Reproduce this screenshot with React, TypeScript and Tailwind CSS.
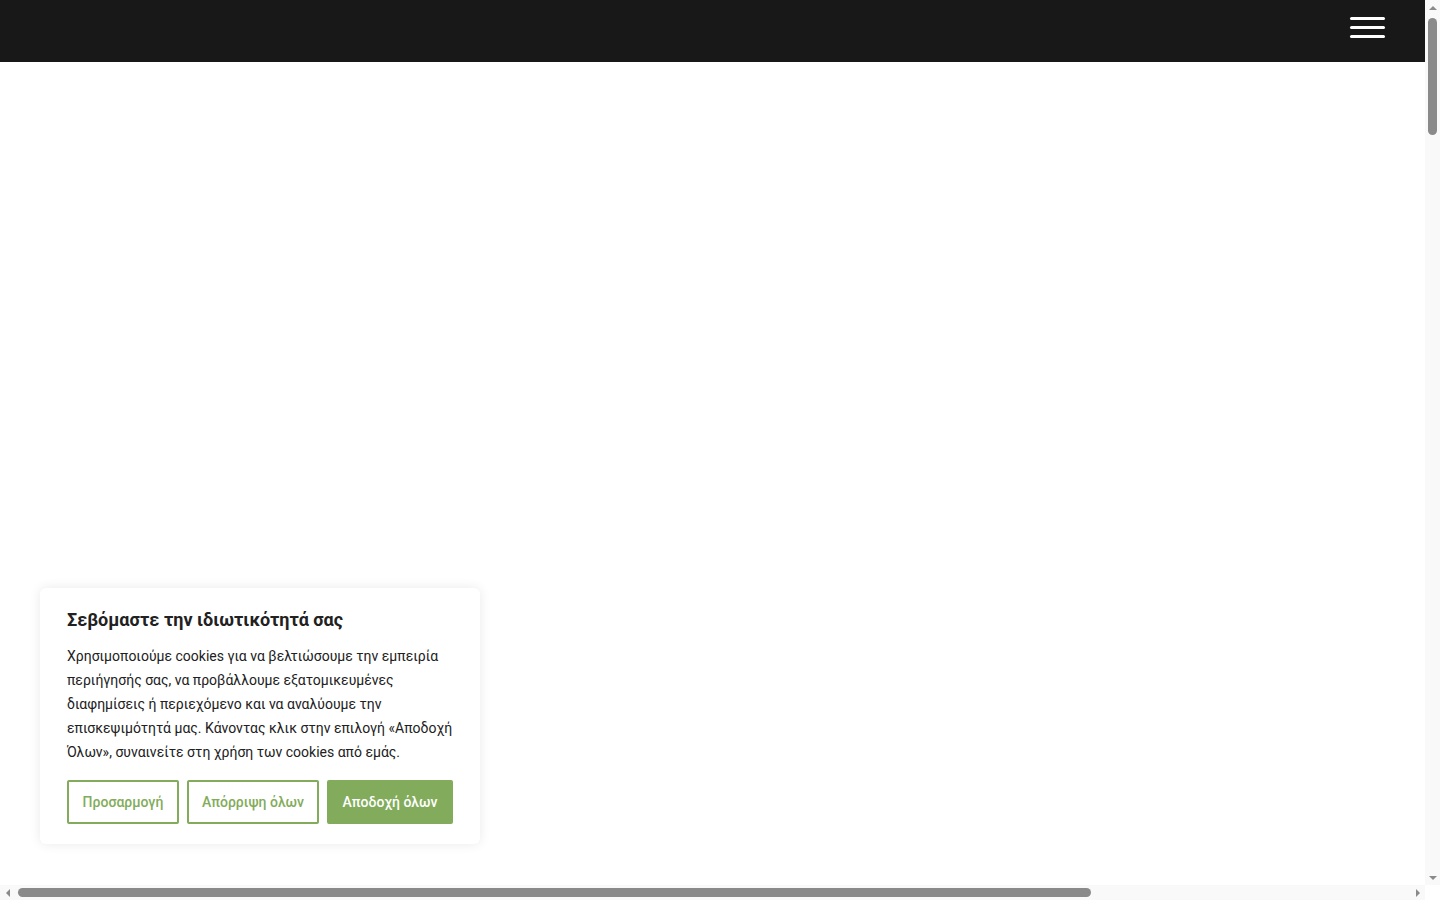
import React from "react";

function MenuIcon() {
  return (
    <button className="flex flex-col gap-[6px] w-[35px]" aria-label="Menu">
      <span className="block h-[3px] w-[35px] rounded-full bg-white" />
      <span className="block h-[3px] w-[35px] rounded-full bg-white" />
      <span className="block h-[3px] w-[35px] rounded-full bg-white" />
    </button>
  );
}

function Arrow({ dir }: { dir: "up" | "down" | "left" | "right" }) {
  const points = {
    up: "1,7 9,7 5,3",
    down: "1,3 9,3 5,7",
    left: "7,1 7,9 3,5",
    right: "3,1 3,9 7,5",
  }[dir];
  return (
    <svg width="10" height="10" viewBox="0 0 10 10" className="block">
      <polygon points={points} fill="#8a8a8a" />
    </svg>
  );
}

function CookieBanner() {
  return (
    <div
      className="absolute left-[40px] bottom-[41px] w-[440px] rounded-[6px] bg-white px-[27px] pt-[20px] pb-[20px] shadow-[0_0_12px_rgba(0,0,0,0.09)]"
      style={{ fontFamily: "Roboto, 'Noto Sans', sans-serif" }}
    >
      <h2 className="text-[18px] leading-[24px] font-bold text-[#212121]">
        Σεβόμαστε την ιδιωτικότητά σας
      </h2>
      <p className="mt-[12px] text-[14px] leading-[24px] text-[#212121] -mr-[4px]">
        Χρησιμοποιούμε cookies για να βελτιώσουμε την εμπειρία περιήγησής σας, να
        προβάλλουμε εξατομικευμένες διαφημίσεις ή περιεχόμενο και να αναλύουμε την
        επισκεψιμότητά μας. Κάνοντας κλικ στην επιλογή «Αποδοχή Όλων», συναινείτε στη
        χρήση των cookies από εμάς.
      </p>
      <div className="mt-[16px] flex gap-[8px]">
        <button className="h-[44px] w-[112px] rounded-[2px] border-2 border-[#82ac5b] bg-white text-[14px] font-medium text-[#82ac5b]">
          Προσαρμογή
        </button>
        <button className="h-[44px] w-[132px] rounded-[2px] border-2 border-[#82ac5b] bg-white text-[14px] font-medium text-[#82ac5b]">
          Απόρριψη όλων
        </button>
        <button className="h-[44px] w-[126px] rounded-[2px] border-2 border-[#82ac5b] bg-[#82ac5b] text-[14px] font-medium text-white">
          Αποδοχή όλων
        </button>
      </div>
    </div>
  );
}

export default function App() {
  return (
    <div className="grid h-screen w-screen grid-cols-[1fr_15px] grid-rows-[1fr_15px] overflow-hidden bg-white">
      {/* page viewport */}
      <div className="relative overflow-hidden bg-white">
        <header className="flex h-[62px] w-full items-start justify-end bg-[#181818] pr-[40px] pt-[17px]">
          <MenuIcon />
        </header>
        <CookieBanner />
      </div>

      {/* vertical scrollbar */}
      <div className="flex flex-col items-center bg-[#f9f9f9]">
        <div className="flex h-[15px] items-center justify-center">
          <Arrow dir="up" />
        </div>
        <div className="mt-[3px] h-[117px] w-[9px] rounded-full bg-[#8a8a8a]" />
        <div className="flex-1" />
        <div className="flex h-[15px] items-center justify-center">
          <Arrow dir="down" />
        </div>
      </div>

      {/* horizontal scrollbar */}
      <div className="flex items-center bg-[#f9f9f9]">
        <div className="flex w-[15px] items-center justify-center">
          <Arrow dir="left" />
        </div>
        <div className="ml-[3px] h-[9px] w-[1073px] rounded-full bg-[#8a8a8a]" />
        <div className="flex-1" />
        <div className="flex w-[15px] items-center justify-center">
          <Arrow dir="right" />
        </div>
      </div>

      {/* corner */}
      <div className="bg-white" />
    </div>
  );
}
